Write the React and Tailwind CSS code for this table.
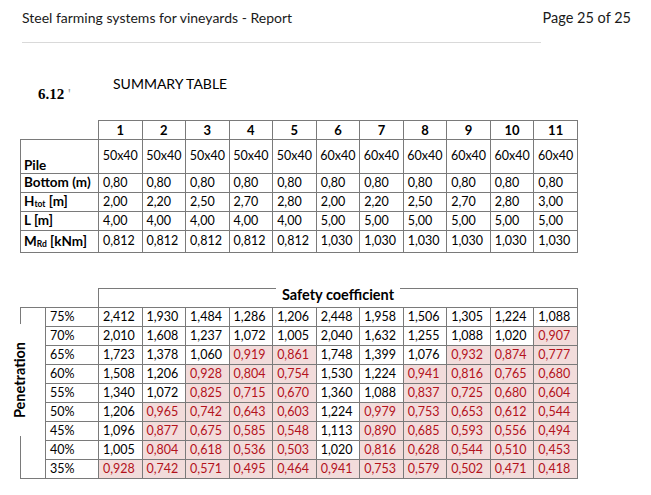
import React from "react";

const font = { fontFamily: '"Lato", "Open Sans", sans-serif' };

const cols = ["1", "2", "3", "4", "5", "6", "7", "8", "9", "10", "11"];

const specs = [
  { label: "Bottom (m)", values: Array(11).fill("0,80") },
  { label: "H", sub: "tot", unit: " [m]", values: ["2,00", "2,20", "2,50", "2,70", "2,80", "2,00", "2,20", "2,50", "2,70", "2,80", "3,00"] },
  { label: "L [m]", values: ["4,00", "4,00", "4,00", "4,00", "4,00", "5,00", "5,00", "5,00", "5,00", "5,00", "5,00"] },
  { label: "M", sub: "Rd", unit: " [kNm]", values: ["0,812", "0,812", "0,812", "0,812", "0,812", "1,030", "1,030", "1,030", "1,030", "1,030", "1,030"], tall: true },
];

const safety = [
  ["75%", "2,412 1,930 1,484 1,286 1,206 2,448 1,958 1,506 1,305 1,224 1,088"],
  ["70%", "2,010 1,608 1,237 1,072 1,005 2,040 1,632 1,255 1,088 1,020 0,907"],
  ["65%", "1,723 1,378 1,060 0,919 0,861 1,748 1,399 1,076 0,932 0,874 0,777"],
  ["60%", "1,508 1,206 0,928 0,804 0,754 1,530 1,224 0,941 0,816 0,765 0,680"],
  ["55%", "1,340 1,072 0,825 0,715 0,670 1,360 1,088 0,837 0,725 0,680 0,604"],
  ["50%", "1,206 0,965 0,742 0,643 0,603 1,224 0,979 0,753 0,653 0,612 0,544"],
  ["45%", "1,096 0,877 0,675 0,585 0,548 1,113 0,890 0,685 0,593 0,556 0,494"],
  ["40%", "1,005 0,804 0,618 0,536 0,503 1,020 0,816 0,628 0,544 0,510 0,453"],
  ["35%", "0,928 0,742 0,571 0,495 0,464 0,941 0,753 0,579 0,502 0,471 0,418"],
];

const edge = "border border-[#7a7a7a] p-0 align-middle";
const cell = `${edge} pl-[4px] text-left`;

export default function App() {
  return (
    <div className="w-[651px] h-[495px] bg-white text-black overflow-hidden" style={font}>
      {/* page header */}
      <div className="flex justify-between pl-[22px] pr-[20px] pt-[9px] text-[14px] leading-[17px] text-[#1a1a1a]">
        <span>Steel farming systems for vineyards - Report</span>
        <span className="text-[14.5px]">Page 25 of 25</span>
      </div>
      <div className="ml-[22px] mt-[16px] w-[519px] h-px bg-[#d9d9d9]" />

      {/* section title */}
      <div className="flex items-start mt-[34px] h-[37px]">
        <span
          className="ml-[38px] mt-[10px] w-[75px] text-[15px] leading-none font-bold"
          style={{ fontFamily: '"Liberation Serif", serif' }}
        >
          6.12 <span className="font-normal text-[#999]">'</span>
        </span>
        <span className="text-[14px] leading-none">SUMMARY TABLE</span>
      </div>

      {/* properties table */}
      <table className="ml-[20px] mt-[6px] w-[558px] table-fixed border-collapse text-[12.5px] leading-none">
        <colgroup>
          <col className="w-[78px]" />
        </colgroup>
        <tbody>
          <tr className="h-[19px]">
            <td className="p-0" />
            {cols.map((c) => (
              <td key={c} className={`${edge} text-center text-[13px] font-bold`}>
                {c}
              </td>
            ))}
          </tr>
          <tr className="h-[34px]">
            <td className="border-l border-t border-[#7a7a7a] p-0 pl-[3px] align-bottom text-[13.5px] font-bold">
              <div className="pb-[1px]">Pile</div>
            </td>
            {cols.map((c, i) => (
              <td key={c} className={`${edge} text-center`}>
                {i < 5 ? "50x40" : "60x40"}
              </td>
            ))}
          </tr>
          {specs.map((row) => (
            <tr key={row.label + (row.sub || "")} className={row.tall ? "h-[22px]" : "h-[19px]"}>
              <td className={`${edge} pl-[3px] text-left text-[13.5px] font-bold whitespace-nowrap`}>
                {row.label}
                {row.sub && <span className="text-[8.5px] align-[-1px]">{row.sub}</span>}
                {row.unit}
              </td>
              {row.values.map((v, i) => (
                <td key={i} className={cell}>
                  {v}
                </td>
              ))}
            </tr>
          ))}
        </tbody>
      </table>

      {/* safety coefficient table */}
      <div className="relative ml-[20px] mt-[35px] w-[558px]">
        <table className="w-[558px] table-fixed border-collapse text-[12.5px] leading-none">
          <colgroup>
            <col className="w-[25px]" />
            <col className="w-[53px]" />
          </colgroup>
          <tbody>
            <tr className="h-[19px]">
              <td className="p-0" />
              <td className="p-0" />
              <td colSpan={11} className="border-l border-r border-t border-[#7a7a7a] p-0 text-center align-top">
                <span className="relative -top-[1px] bg-white px-[6px] text-[14.5px] font-bold">
                  Safety coefficient
                </span>
              </td>
            </tr>
            {safety.map(([pct, vals], r) => (
              <tr key={pct} className="h-[19px]">
                {r === 0 && <td rowSpan={9} className="border border-r-0 border-[#7a7a7a] p-0" />}
                <td className={cell}>{pct}</td>
                {vals.split(" ").map((v, i) => {
                  const low = v.startsWith("0,");
                  return (
                    <td key={i} className={`${cell} ${low ? "bg-[#f2dcdb] text-[#b3121b]" : ""}`}>
                      {v}
                    </td>
                  );
                })}
              </tr>
            ))}
          </tbody>
        </table>
        {/* rotated row label sitting over the left border */}
        <div className="absolute left-0 top-[92px] -translate-x-1/2 -translate-y-1/2 -rotate-90 whitespace-nowrap bg-white px-[18px] text-[14.5px] leading-[18px] font-bold">
          Penetration
        </div>
      </div>
    </div>
  );
}
